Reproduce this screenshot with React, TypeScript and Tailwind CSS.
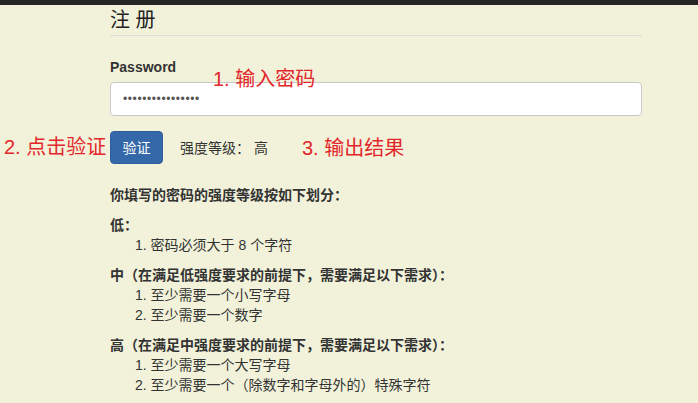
export default function App() {
  return (
    <div className="relative min-h-[403px] bg-[#f2f2da] font-['Liberation_Sans','Noto_Sans_CJK_SC',sans-serif] text-[#333]">
      <div className="h-[5px] bg-[#262626]" />
      <div className="ml-[110px] w-[532px]">
        <h1 className="mt-[3px] border-b border-[#d9dce0] pb-[3px] text-[20px] leading-[24px] text-[#222]">
          注 册
        </h1>
        <label className="mb-[5px] mt-[21px] block text-[14px] font-bold leading-[20px]">Password</label>
        <div className="flex h-[34px] items-center rounded-[4px] border border-[#c8c8c8] bg-white px-[12px]">
          <span className="text-[12px] leading-none tracking-[0.6px] text-[#555]">••••••••••••••••</span>
        </div>
        <div className="mt-[15px] flex items-center text-[14px] leading-[20px]">
          <button className="h-[33px] w-[53px] rounded-[4px] border border-[#2e5f9c] bg-[#3468a8] text-white">
            验证
          </button>
          <span className="ml-[17px]">强度等级： 高</span>
        </div>
        <div className="mt-[21px] text-[14px] leading-[20px]">
          <p className="font-bold">你填写的密码的强度等级按如下划分：</p>
          <p className="mt-[10px] font-bold">低：</p>
          <p className="pl-[25px]">1. 密码必须大于 8 个字符</p>
          <p className="mt-[10px] font-bold">中（在满足低强度要求的前提下，需要满足以下需求）：</p>
          <p className="pl-[25px]">1. 至少需要一个小写字母</p>
          <p className="pl-[25px]">2. 至少需要一个数字</p>
          <p className="mt-[10px] font-bold">高（在满足中强度要求的前提下，需要满足以下需求）：</p>
          <p className="pl-[25px]">1. 至少需要一个大写字母</p>
          <p className="pl-[25px]">2. 至少需要一个（除数字和字母外的）特殊字符</p>
        </div>
      </div>

      {/* red annotations drawn over the form */}
      <span className="absolute left-[213px] top-[69px] text-[20px] leading-[20px] text-[#e3262a]">1. 输入密码</span>
      <span className="absolute left-[4px] top-[137px] text-[20px] leading-[20px] text-[#e3262a]">2. 点击验证</span>
      <span className="absolute left-[302px] top-[138px] text-[20px] leading-[20px] text-[#e3262a]">3. 输出结果</span>
    </div>
  );
}
